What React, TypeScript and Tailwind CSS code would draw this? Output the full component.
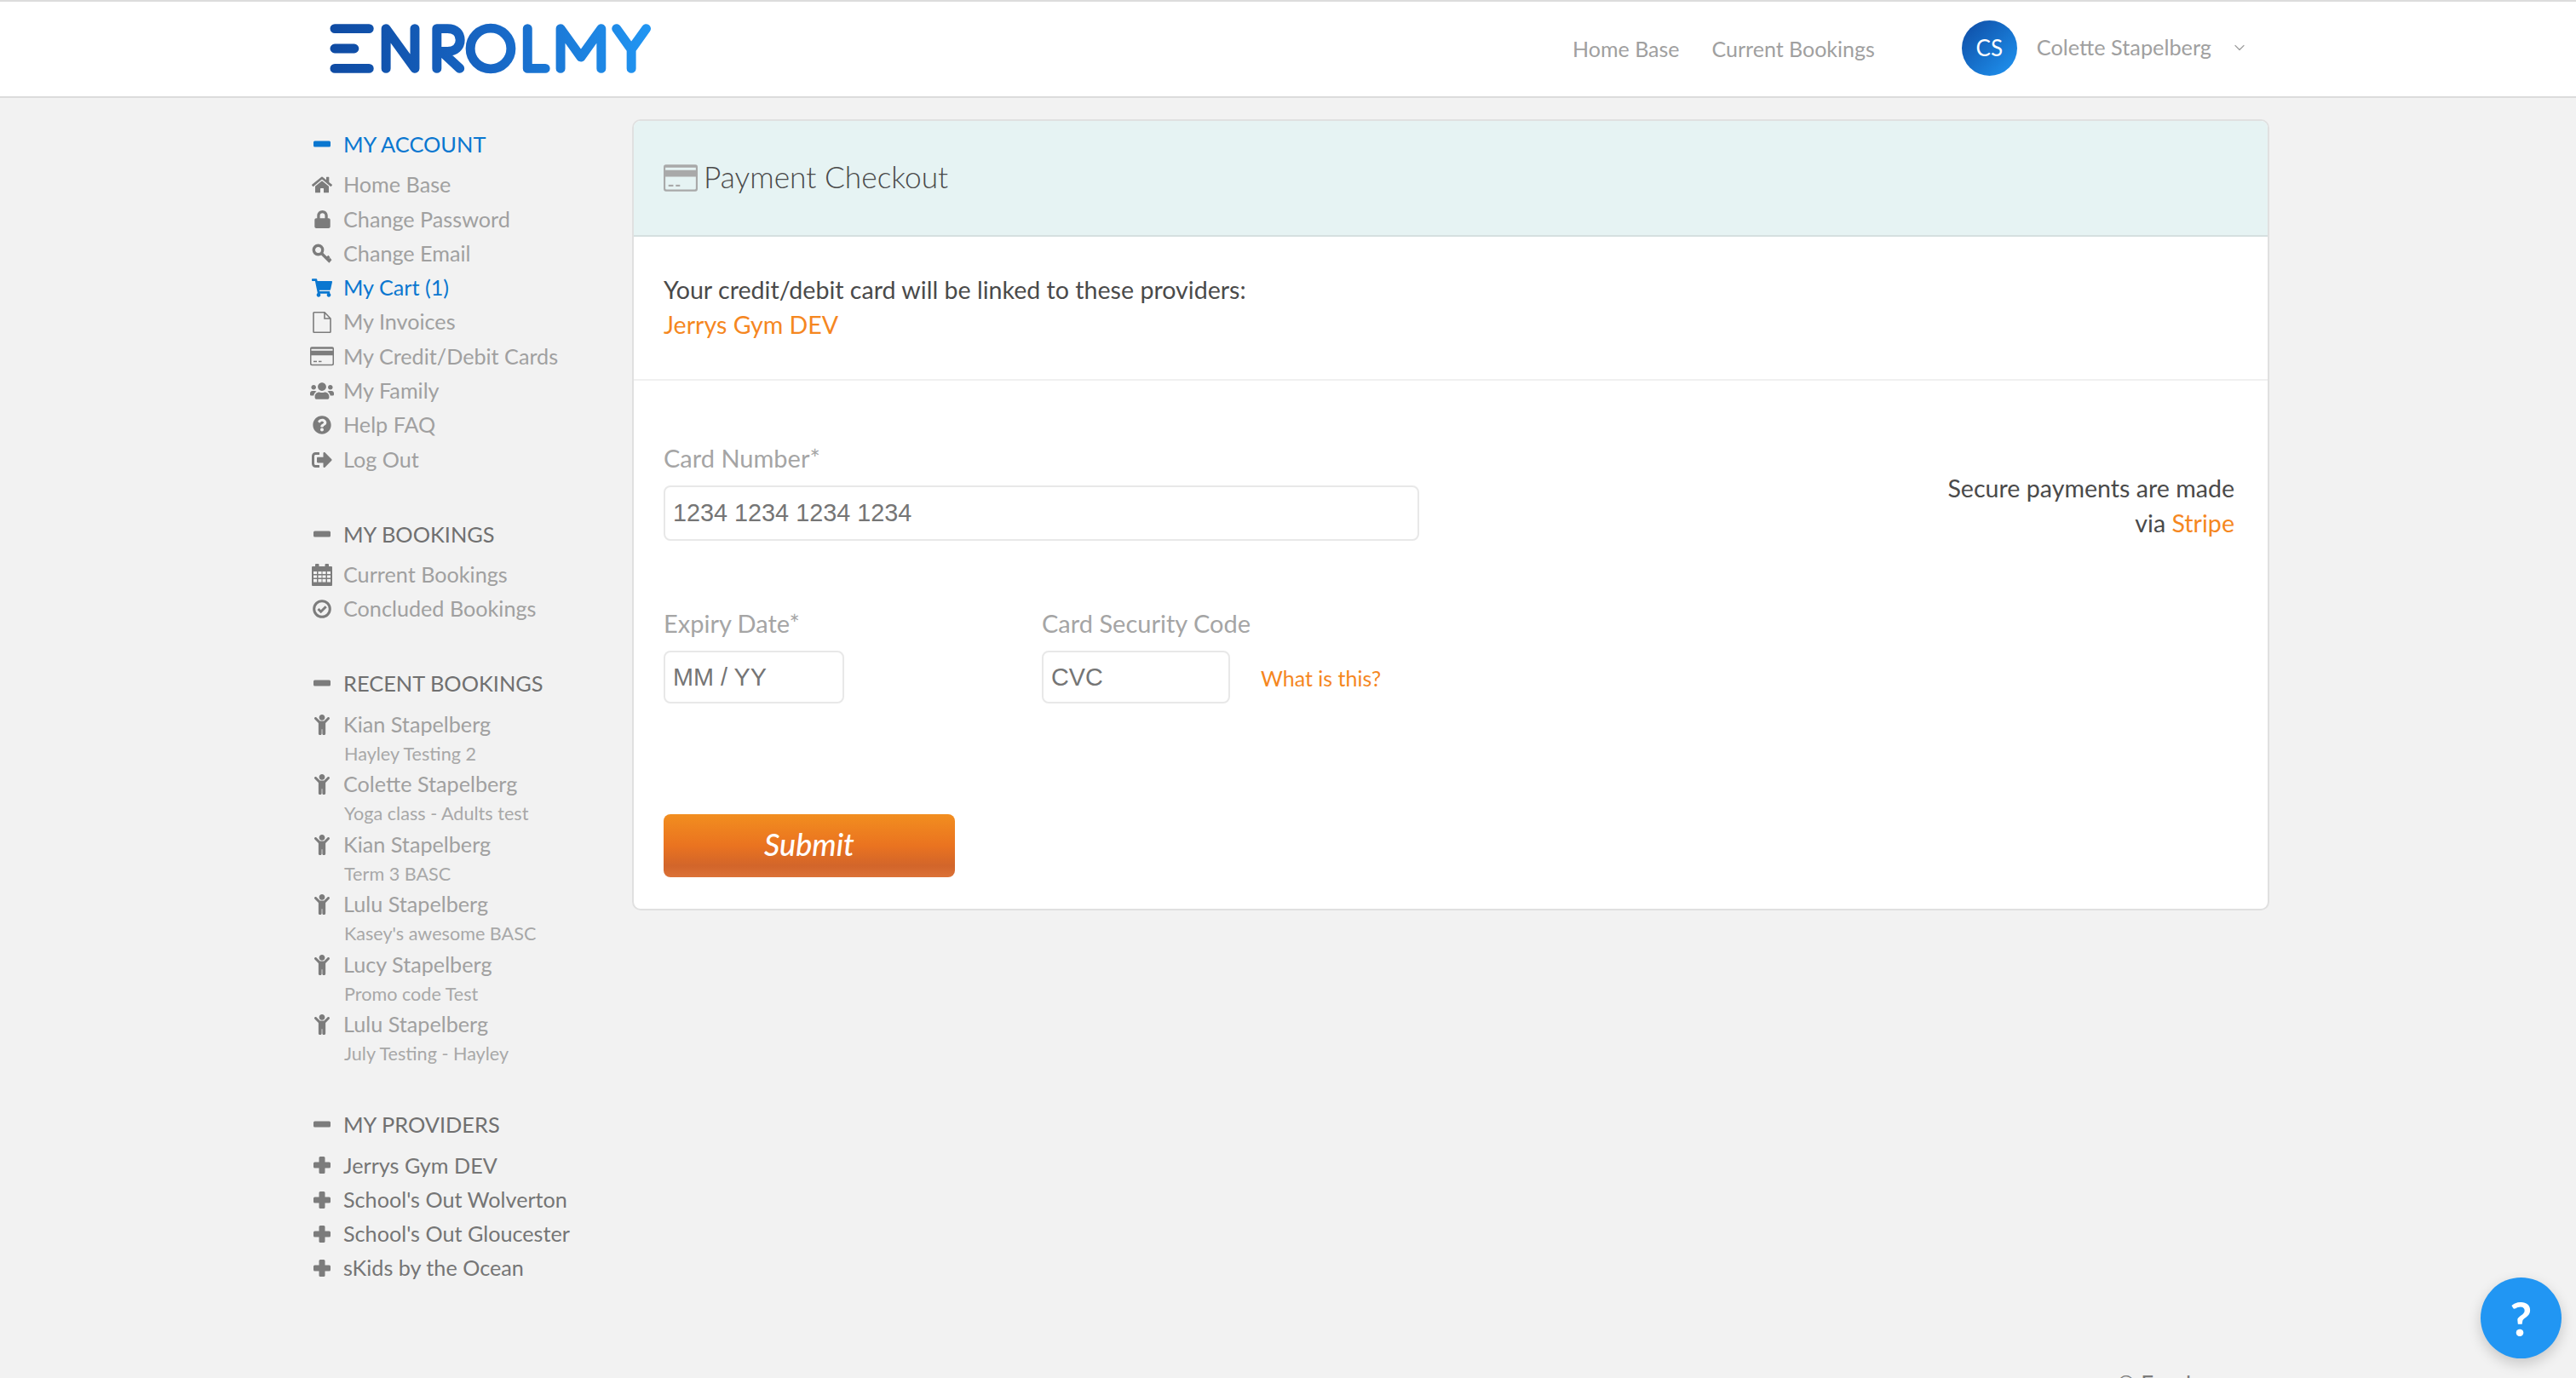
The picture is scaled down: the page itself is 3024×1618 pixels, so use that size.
import { ChevronDown } from "lucide-react";
import {
  FaChild,
  FaHome,
  FaLock,
  FaQuestionCircle,
  FaShoppingCart,
  FaSignOutAlt,
  FaUsers,
} from "react-icons/fa";

const font = "font-['Lato','Liberation_Sans',sans-serif]";

function Logo() {
  return (
    <svg className="-mt-[2px]" width="380" height="60" viewBox="385 26 382 60" fill="none" stroke="url(#logoGrad)" strokeWidth="11" strokeLinecap="round" strokeLinejoin="round">
      <defs>
        <linearGradient id="logoGrad" gradientUnits="userSpaceOnUse" x1="387" y1="56" x2="765" y2="56">
          <stop offset="0" stopColor="#0f4ba3" />
          <stop offset="0.5" stopColor="#1766c4" />
          <stop offset="1" stopColor="#2196f3" />
        </linearGradient>
      </defs>
      <path d="M392 32.500h40.500M392 56h23M392 79.500h40.500" />
      <path d="M452.500 79.500V32.500L486.500 79.500V32.500" />
      <path d="M512.500 79.500V32.500H525C535 32.500 540 38 540 46C540 54 534 59.500 525 59.500H518L539.500 79.500" />
      <circle cx="576" cy="56" r="24" />
      <path d="M619.500 32.500V79.500H640.500" />
      <path d="M658.500 79.500V32.500L682.500 66L706.500 32.500V79.500" />
      <path d="M724.500 32.500L742 57L759.500 32.500M742 57V79.500" />
    </svg>
  );
}

function KeyIcon() {
  return (
    <svg width="24" height="24" viewBox="0 0 24 24" fill="none" stroke="currentColor">
      <circle cx="7.500" cy="7.500" r="5.200" strokeWidth="3.400" />
      <path d="M11 11L21.500 21.500M17.500 17.500l3-2.500M20 20l2.500-2" strokeWidth="3.200" />
    </svg>
  );
}

function CardIcon({ size = 28, color = "currentColor" }: { size?: number; color?: string }) {
  return (
    <svg width={size} height={size * 0.8} viewBox="0 0 28 22" fill={color}>
      <path fillRule="evenodd" d="M2 0h24a2 2 0 0 1 2 2v18a2 2 0 0 1-2 2H2a2 2 0 0 1-2-2V2a2 2 0 0 1 2-2zM1.500 2.500v2h25v-2zM1.500 10v9.500a1 1 0 0 0 1 1h23a1 1 0 0 0 1-1V10z" />
      <rect x="4" y="16.500" width="4" height="1.500" />
      <rect x="10" y="16.500" width="3.500" height="1.500" />
    </svg>
  );
}

function CalendarIcon() {
  return (
    <svg width="24" height="26" viewBox="0 0 24 26" fill="currentColor">
      <path fillRule="evenodd" d="M5 0h2.500a1 1 0 0 1 1 1v2h7V1a1 1 0 0 1 1-1H19a1 1 0 0 1 1 1v2h3a1 1 0 0 1 1 1v21a1 1 0 0 1-1 1H1a1 1 0 0 1-1-1V4a1 1 0 0 1 1-1h3V1a1 1 0 0 1 1-1zM2 9v3h4V9zm5.500 0v3h4V9zm5 0v3h4V9zm5.500 0v3h4V9zM2 13.500v3h4v-3zm5.500 0v3h4v-3zm5 0v3h4v-3zm5.500 0v3h4v-3zM2 18v3.500h4V18zm5.500 0v3.500h4V18zm5 0v3.500h4V18zm5.500 0v3.500h4V18z" />
    </svg>
  );
}

function MinusIcon() {
  return (
    <svg width="20" height="8" viewBox="0 0 20 8" fill="currentColor">
      <rect width="20" height="7" y="0.500" rx="1.500" />
    </svg>
  );
}

function PlusIcon() {
  return (
    <svg width="20" height="20" viewBox="0 0 20 20" fill="currentColor">
      <rect y="6.500" width="20" height="7" rx="1.500" />
      <rect x="6.500" width="7" height="20" rx="1.500" />
    </svg>
  );
}

function FileIcon() {
  return (
    <svg width="22" height="25" viewBox="0 0 22 25" fill="none" stroke="currentColor" strokeWidth="1.600">
      <path d="M1 1.500a.7.7 0 0 1 .7-.7H14L21 8v15.500a.7.7 0 0 1-.7.7H1.700a.7.7 0 0 1-.7-.7zM14 1v7h7" />
    </svg>
  );
}

function CheckCircleIcon() {
  return (
    <svg width="22" height="22" viewBox="0 0 22 22" fill="none" stroke="currentColor" strokeWidth="3">
      <circle cx="11" cy="11" r="9.300" />
      <path d="M6.500 11l3.200 3.200 6-6" />
    </svg>
  );
}

function Heading({ label, active }: { label: string; active?: boolean }) {
  return (
    <div className={"flex items-center h-[40px] mb-[8px] text-[25.4px] " + (active ? "text-[#0a77d0]" : "text-[#707070]")}>
      <span className={"w-[30px] mr-[10px] flex justify-center " + (active ? "text-[#0a77d0]" : "text-[#7c7c7c]")}>
        <MinusIcon />
      </span>
      {label}
    </div>
  );
}

function Item({ icon, label, active, dark }: { icon: React.ReactNode; label: string; active?: boolean; dark?: boolean }) {
  return (
    <div className={"flex items-center h-[40.3px] text-[25.2px] " + (active ? "text-[#0a77d0]" : dark ? "text-[#757575]" : "text-[#a0a0a0]")}>
      <span className={"w-[30px] mr-[10px] flex justify-center " + (active ? "text-[#0a77d0]" : "text-[#7c7c7c]")}>{icon}</span>
      {label}
    </div>
  );
}

function Recent({ name, course }: { name: string; course: string }) {
  return (
    <div className="mb-[2.5px]">
      <div className="flex items-center h-[35px] text-[25.2px] text-[#a0a0a0]">
        <span className="w-[30px] mr-[10px] flex justify-center text-[#7c7c7c]">
          <FaChild size={24} />
        </span>
        {name}
      </div>
      <div className="h-[33px] flex items-center pl-[41px] text-[21.6px] text-[#a8a8a8]">{course}</div>
    </div>
  );
}

const recent = [
  { name: "Kian Stapelberg", course: "Hayley Testing 2" },
  { name: "Colette Stapelberg", course: "Yoga class - Adults test" },
  { name: "Kian Stapelberg", course: "Term 3 BASC" },
  { name: "Lulu Stapelberg", course: "Kasey's awesome BASC" },
  { name: "Lucy Stapelberg", course: "Promo code Test" },
  { name: "Lulu Stapelberg", course: "July Testing - Hayley" },
];

function Sidebar() {
  return (
    <aside className="w-[379px] pl-[363px] box-content shrink-0 pt-[34px]">
      <Heading label="MY ACCOUNT" active />
      <Item icon={<FaHome size={24} />} label="Home Base" />
      <Item icon={<FaLock size={21} />} label="Change Password" />
      <Item icon={<KeyIcon />} label="Change Email" />
      <Item icon={<FaShoppingCart size={24} />} label="My Cart (1)" active />
      <Item icon={<FileIcon />} label="My Invoices" />
      <Item icon={<CardIcon />} label="My Credit/Debit Cards" />
      <Item icon={<FaUsers size={28} />} label="My Family" />
      <Item icon={<FaQuestionCircle size={22} />} label="Help FAQ" />
      <Item icon={<FaSignOutAlt size={24} />} label="Log Out" />

      <div className="mt-[47px]">
        <Heading label="MY BOOKINGS" />
        <Item icon={<CalendarIcon />} label="Current Bookings" />
        <Item icon={<CheckCircleIcon />} label="Concluded Bookings" />
      </div>

      <div className="mt-[47px]">
        <Heading label="RECENT BOOKINGS" />
        <div className="pt-[3px]">
          {recent.map((r, i) => (
            <Recent key={i} name={r.name} course={r.course} />
          ))}
        </div>
      </div>

      <div className="mt-[46.5px]">
        <Heading label="MY PROVIDERS" />
        <Item icon={<PlusIcon />} label="Jerrys Gym DEV" dark />
        <Item icon={<PlusIcon />} label="School's Out Wolverton" dark />
        <Item icon={<PlusIcon />} label="School's Out Gloucester" dark />
        <Item icon={<PlusIcon />} label="sKids by the Ocean" dark />
      </div>
    </aside>
  );
}

function Field({ label, placeholder, width, height }: { label: string; placeholder: string; width: string; height: string }) {
  return (
    <div className={width}>
      <label className="block h-[36px] leading-[36px] mb-[14px] text-[29px] whitespace-nowrap text-[#a5a5a5]">{label}</label>
      <input
        readOnly
        placeholder={placeholder}
        className={"block w-full px-[9px] border-2 border-[#e8e8e8] rounded-[8px] bg-white font-['Liberation_Sans',sans-serif] text-[28.8px] placeholder:text-[#757575] outline-none " + height}
      />
    </div>
  );
}

export default function App() {
  return (
    <div className={"h-screen overflow-hidden bg-[#f2f2f2] relative flex flex-col " + font}>
      <header className="h-[115px] shrink-0 bg-white border-t-2 border-b-2 border-[#dcdcdc] flex items-center justify-between pl-[386px] pr-[385px]">
        <Logo />
        <nav className="flex items-center -mt-[3px]">
          <a className="text-[25px] text-[#a0a0a0] mt-[3px]">Home Base</a>
          <a className="text-[25px] text-[#a0a0a0] ml-[38px] mt-[3px]">Current Bookings</a>
          <div className="ml-[102px] w-[65px] h-[65px] rounded-full bg-gradient-to-br from-[#0f4ba3] to-[#2196f3] flex items-center justify-center text-white text-[26px]">CS</div>
          <span className="ml-[23px] text-[25.3px] text-[#a0a0a0]">Colette Stapelberg</span>
          <ChevronDown className="ml-[23px] text-[#a0a0a0]" size={20} strokeWidth={1.5} />
        </nav>
      </header>

      <div className="flex h-[1491px] shrink-0">
        <Sidebar />
        <main className="w-[1922px] mt-[25px] self-start">
          <section className="bg-white border-2 border-[#e0e0e0] rounded-[10px] overflow-hidden">
            <div className="h-[136px] bg-[#e6f3f3] border-b-2 border-[#d5e0e0] flex items-center pl-[35px]">
              <CardIcon size={40} color="#a9a9a9" />
              <h1 className="ml-[7px] -mt-[2px] text-[35.3px] font-light text-[#4a4a4a]">Payment Checkout</h1>
            </div>
            <div className="pt-[42px] pb-[43px] pl-[35px] border-b-2 border-[#f0f0f0] text-[28.6px] leading-[41px] text-[#4a4a4a]">
              <p>Your credit/debit card will be linked to these providers:</p>
              <a className="text-[#f5871f]">Jerrys Gym DEV</a>
            </div>
            <div className="flex justify-between pl-[35px] pr-[39px] pt-[73px] pb-[37px]">
              <form>
                <Field label="Card Number*" placeholder="1234 1234 1234 1234" width="w-[887px]" height="h-[65px]" />
                <div className="flex items-end mt-[79px]">
                  <Field label="Expiry Date*" placeholder="MM / YY" width="w-[212px]" height="h-[62px]" />
                  <div className="ml-[232px]">
                    <Field label="Card Security Code" placeholder="CVC" width="w-[221px]" height="h-[62px]" />
                  </div>
                  <a className="ml-[36px] mb-[11px] text-[25px] text-[#f5871f]">What is this?</a>
                </div>
                <button
                  type="button"
                  className="mt-[130px] block w-[342px] h-[74px] pb-[5px] rounded-[8px] text-white text-[36px] italic font-medium bg-[linear-gradient(180deg,#f28e1f_0%,#ea7320_50%,#d2652a_82%,#dc7238_100%)]"
                >
                  Submit
                </button>
              </form>
              <p className="pt-[33px] text-right text-[28.6px] leading-[41px] text-[#4a4a4a]">
                Secure payments are made
                <br />
                via <a className="text-[#f5871f]">Stripe</a>
              </p>
            </div>
          </section>
        </main>
      </div>

      <footer className="pl-[2485px] text-[26px] text-[#7c7c7c] whitespace-nowrap">© Enrolmy</footer>

      <button className="absolute right-[17px] bottom-[23px] w-[95px] h-[95px] rounded-full bg-[#2196f3] text-white text-[56px] font-bold flex items-center justify-center shadow-[0_6px_16px_rgba(0,0,0,0.18)]">
        ?
      </button>
    </div>
  );
}
